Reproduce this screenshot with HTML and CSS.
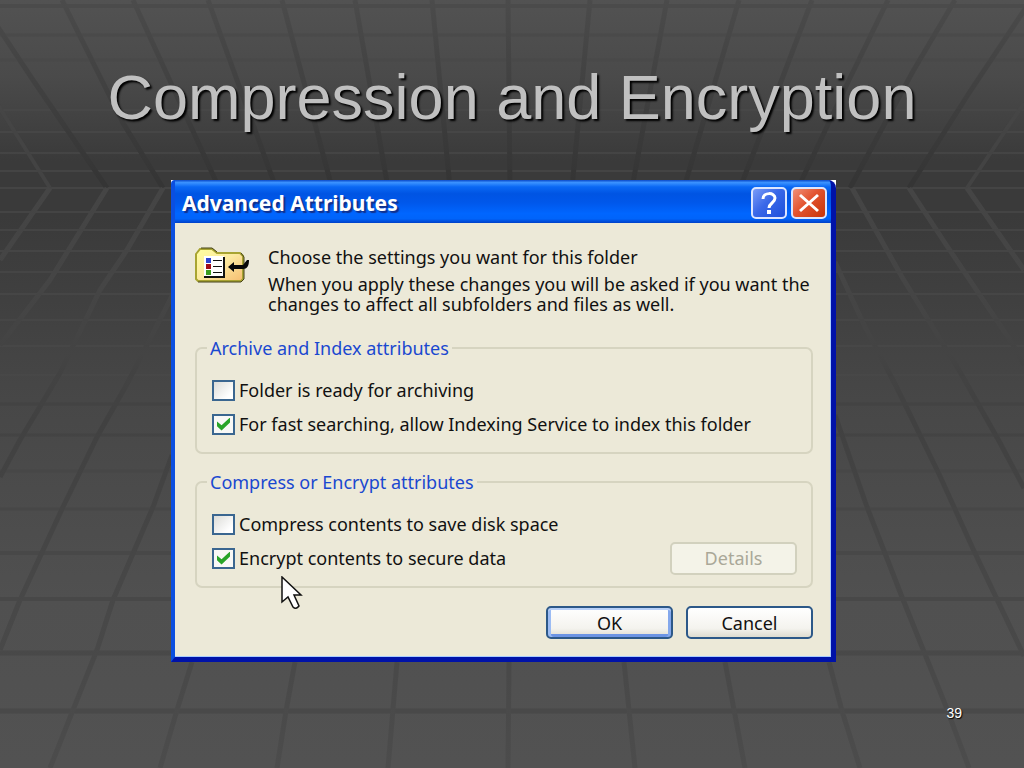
FILE: index.html
```html
<!DOCTYPE html>
<html lang="en">
<head>
    <meta charset="UTF-8">
    <meta name="viewport" content="width=device-width, initial-scale=1.0">
    <title>Compression and Encryption</title>
    <link rel="stylesheet" href="styles.css">
</head>
<body>

    <main class="slide">
        <!-- Perspective grid: ceiling above the horizon, floor below -->
        <svg class="grid" viewBox="0 0 1024 768" preserveAspectRatio="none" aria-hidden="true">
            <defs>
                <linearGradient id="ceiling" gradientUnits="userSpaceOnUse" x1="0" y1="0" x2="0" y2="188">
                    <stop offset="0" stop-color="#494949"/>
                    <stop offset="1" stop-color="#333333"/>
                </linearGradient>
                <linearGradient id="floor" gradientUnits="userSpaceOnUse" x1="0" y1="188" x2="0" y2="768">
                    <stop offset="0" stop-color="#4a4a4a"/>
                    <stop offset="0.18" stop-color="#484848"/>
                    <stop offset="0.4" stop-color="#3f3f3f"/>
                    <stop offset="1" stop-color="#4a4a4a"/>
                </linearGradient>
            </defs>
            <g fill="none" stroke="#494949">
                <path stroke-width="4" d="M0 6H1024"/>
                <path stroke-width="3" d="M0 35H1024M0 60H1024"/>
                <path stroke-width="2" d="M0 87H1024M0 110H1024M0 132H1024M0 153H1024M0 171H1024M0 188H1024M0 212H1024M0 230H1024M0 251H1024M0 272H1024M0 294H1024M0 320H1024M0 346H1024M0 375H1024"/>
            </g>
            <g fill="none" stroke="#424242">
                <path stroke-width="3" d="M0 404H1024M0 435H1024"/>
            </g>
            <g fill="none" stroke="#464646">
                <path stroke-width="3" d="M0 471H1024M0 509H1024"/>
                <path stroke-width="4" d="M0 553H1024M0 599H1024"/>
                <path stroke-width="5" d="M0 653H1024M0 711H1024"/>
            </g>
            <g fill="none" stroke="url(#ceiling)" stroke-width="5">
                <path d="M-20 0L33 80L107 188M62 0L123 123L163 188M133 0L219 188M208 0L276 188M282 0L332 188M355 0L388 188M432 0L450 188"/>
                <path d="M590 0L572 188M667 0L632 188M739 0L684 188M812 0L779 87L740 188M888 0L849 80L798 188M955 0L912 73L850 188M1031 0L969 93L909 188"/>
                <path d="M508 0L510 188L511 188"/>
            </g>
            <g fill="none" stroke="#474747" stroke-width="4">
                <path d="M-24 70L50 188M1024 103L967 188"/>
            </g>
            <g fill="none" stroke="url(#floor)" stroke-width="5">
                <path d="M50 188L0 260M107 188L50 280L0 345M163 188L127 250L100 290L60 373L20 440L0 477"/>
                <path d="M219 188L170 300L127 384L97 437L63 507L20 600L0 650M172 455L153 507L113 600L97 650L73 710L50 768"/>
                <path d="M192 662L177 710L160 768M295 662L286 711L277 768M397 662L388 768M509 662L508 768M624 662L635 768M725 662L745 768M829 662L842 711L860 768"/>
                <path d="M835 415L867 507L902 597L945 704L969 768M835 262L865 327L895 384L939 474L974 551L1024 656M852 188L902 277L959 370L999 441L1024 488M909 188L945 243L1012 343L1024 365M967 188L1024 270"/>
            </g>
        </svg>

        <h1 class="slide-title">Compression and Encryption</h1>

        <div class="dialog-wrap">
            <section class="dialog" aria-labelledby="dialogTitle">
                <div class="title-bar">
                    <h2 id="dialogTitle">Advanced Attributes</h2>
                    <button type="button" class="caption-btn help" aria-label="Help">
                        <svg viewBox="0 0 32 28" aria-hidden="true">
                            <path d="M10 10C10 3 22 3 22 9C22 14 16 14 16 19" fill="none" stroke="#fff" stroke-width="3"/>
                            <path d="M14 21h4v4h-4z" fill="#fff"/>
                        </svg>
                    </button>
                    <button type="button" class="caption-btn close" aria-label="Close">
                        <svg viewBox="0 0 32 28" aria-hidden="true">
                            <path d="M7 6L25 22M25 6L7 22" fill="none" stroke="#fff" stroke-width="3"/>
                        </svg>
                    </button>
                </div>

                <form class="dialog-body">
                    <div class="intro">
                        <svg class="folder-icon" viewBox="0 0 54 40" aria-hidden="true">
                            <defs>
                                <linearGradient id="folder" x1="0" y1="0" x2="1" y2="1">
                                    <stop offset="0" stop-color="#ffffa0"/>
                                    <stop offset="0.5" stop-color="#fce9a0"/>
                                    <stop offset="1" stop-color="#f6bd70"/>
                                </linearGradient>
                            </defs>
                            <path d="M1 7L5 2H17L22 6H45L48 9V32L46 34H3L1 32Z" fill="url(#folder)" stroke="#a8a432" stroke-width="2"/>
                            <path d="M6 1H17L22 5M3 35H46L49 32V10L46 6" fill="none" stroke="#45421a" stroke-width="1"/>
                            <path d="M9 9H29V30H9Z" fill="#fff"/>
                            <path d="M29 10V30H9" fill="none" stroke="#111" stroke-width="2"/>
                            <path d="M11 11h5v5h-5z" fill="#2c43cf"/>
                            <path d="M11 17h5v5h-5z" fill="#a00c18"/>
                            <path d="M11 23h5v5h-5z" fill="#3c9c20"/>
                            <path d="M18 13h9v1h-9zM18 19h9v1h-9zM18 25h9v1h-9z" fill="#111"/>
                            <path d="M33 20L39 15V18H48L52 13H54C54 19 52 22 48 22H39V25Z" fill="#080808"/>
                        </svg>
                        <div class="intro-text">
                            <p>Choose the settings you want for this folder</p>
                            <p>When you apply these changes you will be asked if you want the changes to affect all subfolders and files as well.</p>
                        </div>
                    </div>

                    <fieldset class="group">
                        <legend>Archive and Index attributes</legend>
                        <div class="row">
                            <input type="checkbox" id="archive">
                            <label for="archive">Folder is ready for archiving</label>
                        </div>
                        <div class="row">
                            <input type="checkbox" id="index" checked>
                            <label for="index">For fast searching, allow Indexing Service to index this folder</label>
                        </div>
                    </fieldset>

                    <fieldset class="group">
                        <legend>Compress or Encrypt attributes</legend>
                        <div class="row">
                            <input type="checkbox" id="compress">
                            <label for="compress">Compress contents to save disk space</label>
                        </div>
                        <div class="row">
                            <input type="checkbox" id="encrypt" checked>
                            <label for="encrypt">Encrypt contents to secure data</label>
                            <button type="button" class="btn details" disabled>Details</button>
                        </div>
                    </fieldset>

                    <div class="actions">
                        <button type="button" class="btn default">OK</button>
                        <button type="button" class="btn">Cancel</button>
                    </div>
                </form>
            </section>

            <svg class="cursor" viewBox="0 0 22 34" aria-hidden="true">
                <path d="M1 1V26L7 21L12 31Q15 34 18 30L13 19H20Z" fill="#fff" stroke="#111" stroke-width="1.5"/>
            </svg>
        </div>

        <footer class="page-number">39</footer>
    </main>

</body>
</html>
```
FILE: styles.css
```css
* {
    margin: 0;
    padding: 0;
    box-sizing: border-box;
}

body {
    font-family: "Noto Sans", "DejaVu Sans", sans-serif;
    font-size: 18px;
    line-height: 20px;
    color: #111;
}

.slide {
    position: relative;
    display: flex;
    flex-direction: column;
    min-height: 100vh;
    background: linear-gradient(#525252 0%, #4a4a4a 10%, #3a3a3a 21%, #3a3a3a 28%, #474747 52%, #505050 78%, #525252 100%);
}

.grid {
    position: absolute;
    inset: 0;
    width: 100%;
    height: 100%;
    opacity: 0.7;
}

.slide-title {
    position: relative;
    padding-top: 61px;
    font-family: "Liberation Sans", Arial, sans-serif;
    font-size: 63px;
    font-weight: normal;
    line-height: 72px;
    text-align: center;
    color: #c0c0c0;
    text-shadow: 2px 2px 2px #000;
}

/* White shows behind the rounded corners of the window */
.dialog-wrap {
    position: relative;
    margin: 47px 188px 0 171px;
    background: linear-gradient(#fff, #fff) top / 100% 20px no-repeat;
}

.dialog {
    border-radius: 4px 8px 0 0;
    overflow: hidden;
    background: #0a50e0;
    border: solid;
    border-width: 0 5px 5px 4px;
    border-color: #0010a8 #0012a8 #0012a8 #0b4fe0;
}

.title-bar {
    display: flex;
    align-items: center;
    gap: 4px;
    height: 43px;
    padding: 3px 4px 0 7px;
    background: linear-gradient(#0a48c8 0%, #3c93ff 6%, #0a68f4 16%, #0054e3 32%, #0057ea 52%, #0066ff 78%, #0064fa 90%, #0040c8 100%);
}

.title-bar h2 {
    flex: 1;
    font-size: 21px;
    color: #fff;
    text-shadow: 2px 2px 1px #10308c;
}

.caption-btn {
    width: 36px;
    height: 32px;
    border: 2px solid #dce6ff;
    border-radius: 5px;
}

.caption-btn svg {
    display: block;
    width: 100%;
    height: 100%;
}

.help {
    background: linear-gradient(135deg, #7a9cf8, #3a68e8 45%, #1c50dc);
}

.close {
    background: linear-gradient(135deg, #f09078, #e2532f 45%, #c83408);
}

.dialog-body {
    display: flex;
    flex-direction: column;
    gap: 18px;
    padding: 24px 18px 18px 20px;
    background: #ece9d8;
    box-shadow: inset -1px -1px 0 #a8ccff;
}

.intro {
    display: flex;
    gap: 19px;
    margin-bottom: 6px;
}

.folder-icon {
    flex: none;
    width: 54px;
    height: 40px;
}

.intro-text p + p {
    margin-top: 7px;
}

.group {
    min-width: 0;
    padding: 15px 14px 11px 15px;
    border: 2px solid #d6d4c0;
    border-radius: 7px;
}

.group legend {
    margin-left: -5px;
    padding: 0 3px;
    color: #1a48d0;
}

.row {
    display: flex;
    align-items: center;
    gap: 4px;
    height: 34px;
}

input[type="checkbox"] {
    appearance: none;
    display: grid;
    place-items: center;
    width: 23px;
    height: 21px;
    border: 2px solid #3a6690;
    background: linear-gradient(135deg, #dcdcd8, #fff 80%);
}

input[type="checkbox"]:checked {
    background: #f8f8f6;
}

input[type="checkbox"]:checked::before {
    content: "";
    width: 13px;
    height: 13px;
    background: #28a428;
    clip-path: polygon(0 30%, 35% 60%, 100% 0, 100% 38%, 35% 100%, 0 68%);
}

.btn {
    width: 127px;
    height: 33px;
    border: 2px solid #2c5888;
    border-radius: 5px;
    background: linear-gradient(#fff, #f4f3ee 70%, #dedcd0);
    font: inherit;
    color: #111;
}

.btn.default {
    box-shadow: inset 0 2px 0 #b8d0f8, inset 3px 0 0 #9cbcf4, inset -3px 0 0 #84a8ec, inset 0 -3px 0 #6c94e4;
}

.btn.details {
    margin-left: auto;
    border-color: #d2d1be;
    background: #f4f3e8;
    color: #aaa898;
}

.actions {
    display: flex;
    justify-content: flex-end;
    gap: 13px;
}

/* Mouse pointer resting over the window */
.cursor {
    position: absolute;
    left: 110px;
    top: 396px;
    width: 22px;
    height: 34px;
}

.page-number {
    position: relative;
    margin-top: auto;
    padding: 0 62px 45px 0;
    font-family: "Liberation Sans", Arial, sans-serif;
    font-size: 14px;
    text-align: right;
    color: #fff;
    text-shadow: 1px 1px 1px #000;
}
```
